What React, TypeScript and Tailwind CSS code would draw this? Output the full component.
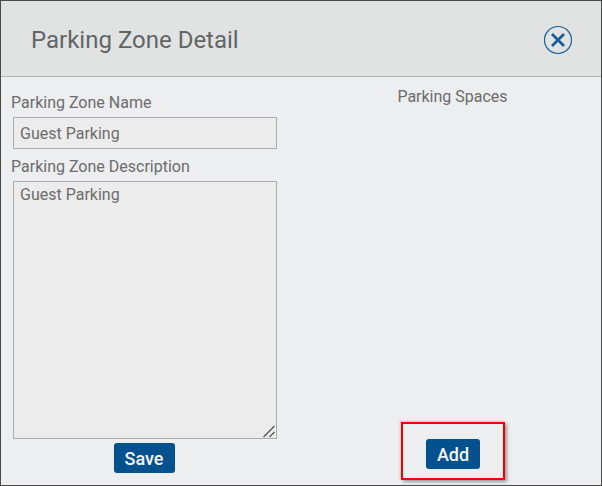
import React from "react";

export default function App() {
  return (
    <div className="w-[602px] h-[486px] overflow-hidden bg-[#edeef0] border-t border-l border-b border-r border-[#4a4a4a] flex flex-col font-['Roboto',sans-serif] text-[#6c6c6c]">
      <header className="h-[76px] shrink-0 bg-[#e1e3e3] border-b border-[#b4b6b6] flex items-center justify-between pl-[30px] pr-[28px] pt-[2px]">
        <h1 className="text-[24px] leading-[30px] text-[#636565]">Parking Zone Detail</h1>
        <svg width="30" height="30" viewBox="0 0 30 30" fill="none" className="text-[#175d97]">
          <circle cx="15" cy="15" r="13.5" stroke="currentColor" strokeWidth="1.2" />
          <path d="M9 9 L21 21 M21 9 L9 21" stroke="currentColor" strokeWidth="2.8" />
        </svg>
      </header>
      <main className="flex-1 flex min-h-0">
        <section className="w-[300px] pl-[10px] flex flex-col">
          <label className="block text-[16px] leading-[20px] mt-[16px]">Parking Zone Name</label>
          <input
            readOnly
            defaultValue="Guest Parking"
            className="ml-[2px] mt-[4px] w-[264px] h-[32px] bg-[#ececec] border border-[#acacac] px-[6px] text-[16px] text-[#6c6c6c] outline-none"
          />
          <label className="block text-[16px] leading-[20px] mt-[8px]">Parking Zone Description</label>
          <div className="relative ml-[2px] mt-[4px] w-[264px] h-[258px]">
            <textarea
              readOnly
              defaultValue="Guest Parking"
              className="block w-full h-full bg-[#ececec] border border-[#acacac] px-[6px] py-[3px] text-[16px] leading-[20px] text-[#6c6c6c] outline-none resize-none"
            />
            <svg width="14" height="14" viewBox="0 0 14 14" className="absolute right-[1px] bottom-[1px]" fill="none" stroke="#555555" strokeWidth="1.3">
              <path d="M1.5 13 L12.5 2 M7.5 13 L12.5 8" />
            </svg>
          </div>
          <div className="w-[266px] flex justify-center mt-[4px]">
            <button className="w-[61px] h-[30px] rounded-[3px] bg-[#03518f] text-[#f4f7fa] text-[18px] font-medium">Save</button>
          </div>
        </section>
        <section className="flex-1 relative flex flex-col items-center pl-[4px] pb-[16px]">
          <p className="text-[16px] leading-[20px] mt-[10px] ml-[-1px]">Parking Spaces</p>
          <button className="mt-auto w-[54px] h-[30px] rounded-[3px] bg-[#03518f] text-[#f4f7fa] text-[18px] font-medium">Add</button>
          <div className="absolute left-[100px] top-[345px] w-[104px] h-[58px] border-2 border-[#f00000] shadow-[2px_2px_3px_rgba(0,0,0,0.35),-1px_-1px_2px_rgba(0,0,0,0.15)]" />
        </section>
      </main>
    </div>
  );
}
